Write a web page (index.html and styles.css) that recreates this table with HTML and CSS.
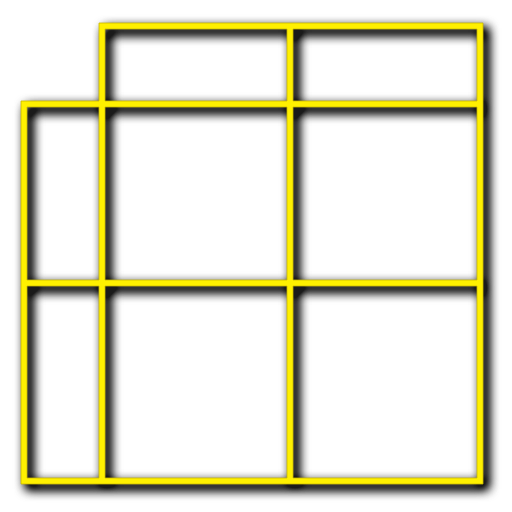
FILE: index.html
```html
<!DOCTYPE html>
<html>
<head>
<meta charset="utf-8">
<link rel="stylesheet" href="styles.css">
</head>
<body>
<div class="canvas">
<svg class="grid" width="512" height="512" viewBox="0 0 512 512" xmlns="http://www.w3.org/2000/svg">
  <defs>
    <filter id="sh" x="-10%" y="-10%" width="130%" height="130%" color-interpolation-filters="sRGB">
      <feGaussianBlur in="SourceAlpha" stdDeviation="5.5" result="b"/>
      <feOffset in="b" dx="5" dy="5" result="o"/>
      <feComponentTransfer in="o" result="a">
        <feFuncA type="linear" slope="1.9"/>
      </feComponentTransfer>
      <feFlood flood-color="#1a1a1a" result="f"/>
      <feComposite in="f" in2="a" operator="in" result="s"/>
      <feMerge>
        <feMergeNode in="s"/>
        <feMergeNode in="SourceGraphic"/>
      </feMerge>
    </filter>
  </defs>
  <g filter="url(#sh)" fill="#fff000" stroke="#c9b800" stroke-width="0.8">
    <path d="M99 23 H483 V484 H21 V101 H99 Z M105 29 V101 H287 V29 Z M293 29 V101 H477 V29 Z M27 107 V280 H99 V107 Z M105 107 V280 H287 V107 Z M293 107 V280 H477 V107 Z M27 286 V478 H99 V286 Z M105 286 V478 H287 V286 Z M293 286 V478 H477 V286 Z" fill-rule="evenodd"/>
  </g>
</svg>
</div>
</body>
</html>
```
FILE: styles.css
```css
html, body {
  margin: 0;
  padding: 0;
  background: #ffffff;
}
.canvas {
  width: 512px;
  height: 512px;
  overflow: hidden;
}
.grid {
  display: block;
}
```
